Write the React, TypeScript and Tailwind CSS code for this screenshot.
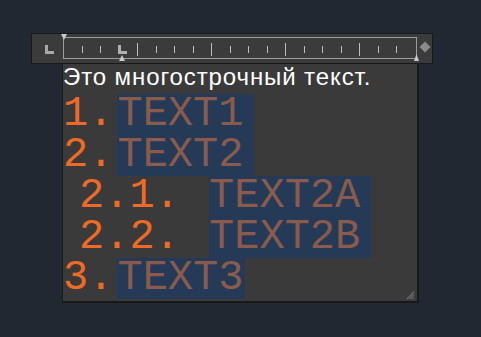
import type { ReactElement } from 'react';

type Line = {
    label: string;
    text: string;
    indent: boolean;
    trail: boolean;
};

const lines: Line[] = [
    { label: '1.', text: 'TEXT1', indent: false, trail: true },
    { label: '2.', text: 'TEXT2', indent: false, trail: true },
    { label: '2.1. ', text: 'TEXT2A', indent: true, trail: true },
    { label: '2.2. ', text: 'TEXT2B', indent: true, trail: true },
    { label: '3.', text: 'TEXT3', indent: false, trail: false }
];

const Ruler = (): ReactElement => {
    const ticks = Array.from({ length: 18 }, (_, i) => i + 1);
    return (
        <svg width="400" height="29" viewBox="0 0 400 29" className="block">
            <rect x="31.5" y="3.5" width="353" height="21" fill="none" stroke="#9c9c9c" />
            {ticks.map((k) => {
                const x = Math.round(31 + 18.5 * k) + 0.5;
                const big = k % 4 === 0;
                return (
                    <line
                        key={k}
                        x1={x}
                        x2={x}
                        y1={big ? 9 : 12}
                        y2={big ? 22 : 19}
                        stroke="#bdbdbd"
                        strokeWidth="1"
                    />
                );
            })}
            {/* tab type selector */}
            <path d="M13 11h3v6h6v3h-9z" fill="#a8a8a8" />
            {/* left tab stop */}
            <path d="M86 11h3v6h6v3h-9z" fill="#b0b0b0" />
            {/* hanging indent */}
            <path d="M87 27l3-6 3 6z" fill="#c8c8c8" />
            {/* first line indent */}
            <path d="M29 0h6l-3 6z" fill="#c8c8c8" />
            {/* right indent */}
            <path d="M382 27l2.5-7 2.5 7z" fill="#c8c8c8" />
            <path d="M393 7.5l5.5 5.5-5.5 5.5-5.5-5.5z" fill="#8a8a8a" />
        </svg>
    );
};

export default function App(): ReactElement {
    return (
        <div className="w-[481px] h-[337px] bg-[#222831] overflow-hidden">
            <div className="ml-[31px] pt-[33px]">
                <div className="w-[402px] h-[31px] border border-[#17191c] bg-[#3b3b3b]">
                    <Ruler />
                </div>
            </div>
            <div className="ml-[62px] w-[357px] h-[239px] bg-[#3a3a3a] border-l border-l-[#1c1c1c] border-r-2 border-b-2 border-r-[#191919] border-b-[#191919] relative">
                <div
                    className="h-[30px] text-[24px] leading-[26px] tracking-[0.9px] text-white whitespace-nowrap"
                    style={{ fontFamily: '"Liberation Sans", Arial, sans-serif' }}
                >
                    Это многострочный текст.
                </div>
                <div style={{ fontFamily: '"Courier New", "Liberation Mono", monospace' }}>
                    {lines.map((l) => (
                        <div
                            key={l.text}
                            className={`flex h-[41px] text-[42px] leading-[41px] whitespace-pre ${
                                l.indent ? 'pl-[16px]' : 'pl-0'
                            }`}
                        >
                            <span className="text-[#ef6a26]">{l.label}</span>
                            <span
                                className={`ml-1 bg-[#243a56] text-[#8a5b4d] ${
                                    l.trail ? 'pr-[11px]' : 'pr-[2px]'
                                }`}
                            >
                                {l.text}
                            </span>
                        </div>
                    ))}
                </div>
                <svg
                    width="10"
                    height="10"
                    viewBox="0 0 10 10"
                    className="absolute right-[2px] bottom-[1px]"
                >
                    <path d="M9 2L2 9M9 5L5 9M9 8L8 9" stroke="#6a6a6a" strokeWidth="1.5" />
                </svg>
            </div>
        </div>
    );
}
